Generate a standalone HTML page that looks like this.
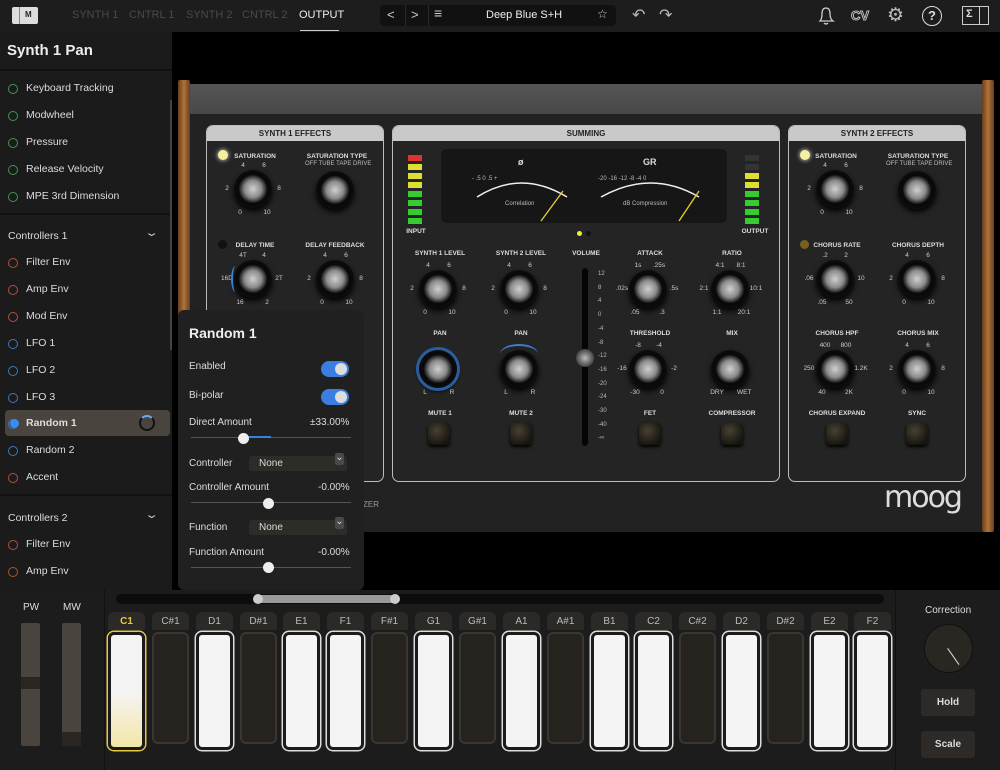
<!DOCTYPE html>
<html><head><meta charset="utf-8"><style>
*{box-sizing:border-box;margin:0;padding:0}
body{width:1000px;height:770px;background:#000;font-family:"Liberation Sans",sans-serif;position:relative;overflow:hidden;color:#ddd}
.a{position:absolute}
.top{left:0;top:0;width:1000px;height:32px;background:#1d1d1d}
.tab{top:9px;font-size:11px;color:#4a4a4a}
.side{left:0;top:32px;width:172px;height:558px;background:#1b1b1b}
.it{left:8px;font-size:10.5px;color:#ddd;height:27px;line-height:27px;padding-left:18px}
.it:before{content:"";position:absolute;left:0;top:9px;width:8px;height:8px;border-radius:50%;border:1.3px solid #3a9a4a}
.r:before{border-color:#b0503a}.b:before{border-color:#3e78b8}
.sec{left:8px;font-size:10.5px;color:#ddd}
.hr{left:0;width:172px;height:2px;background:#111}
.panel{background:#242424;border:1.5px solid #bdbdbd;border-radius:7px;overflow:hidden}
.ph{height:15px;background:#c9c9c9;color:#222;font-size:8px;font-weight:bold;text-align:center;line-height:15px}
.lb{font-size:6.5px;font-weight:bold;color:#ddd;text-align:center;width:90px;margin-left:-45px}
.k{width:38px;height:38px;margin:-19px 0 0 -19px;border-radius:50%;background:radial-gradient(circle at 50% 50%,#d0d0d0 0,#8a8a8a 32%,#3a3a3a 46%,#080808 54%,#141414 100%);box-shadow:0 3px 6px #000}
.kw{width:0;height:0}
.kw span{position:absolute;font-size:6.5px;color:#ccc;width:14px;margin-left:-7px;text-align:center;line-height:7px}
.t0{left:-13px;top:20px}.t10{left:14px;top:20px}.t2{left:-26px;top:-4px}.t8{left:26px;top:-4px}.t4{left:-10px;top:-27px}.t6{left:11px;top:-27px}
.tk{font-size:6px;color:#bbb}
.btn{width:22px;height:22px;margin:-11px 0 0 -11px;border-radius:4px;background:radial-gradient(circle at 40% 35%,#4a4030,#151510 75%);box-shadow:0 2px 3px #000}
.key{top:612px;width:37px;height:18px;border-radius:6px 6px 0 0;background:#2b2a27;font-size:10px;text-align:center;line-height:20px;color:#bbb}
.w{top:632px;width:37px;height:118px;border-radius:6px;background:#f4f4f4;border:3px solid #1b1b1b;box-shadow:0 0 0 1.5px #ddd}
.bk{top:632px;width:37px;height:112px;border-radius:6px;background:#26231f;border:2px solid #3a3631}
.pop{left:178px;top:310px;width:186px;height:280px;background:#202020;border-radius:6px}
.pl{font-size:10px;color:#ddd}
.tg{width:28px;height:16px;border-radius:8px;background:#3a7fe0}
.tg:after{content:"";position:absolute;right:2px;top:2px;width:12px;height:12px;border-radius:50%;background:#ddd}
.sl{height:1px;background:#555;width:160px}
.th{width:11px;height:11px;border-radius:50%;background:#eee;margin:-5px 0 0 -5px}
.dd{width:98px;height:15px;background:#2e2c29;border-radius:3px;font-size:10px;color:#ddd;padding-left:10px;line-height:15px}
.dd:after{content:"⌄";position:absolute;right:3px;top:-3px;font-size:10px;width:9px;height:12px;background:#4a4a4a;border-radius:2px;text-align:center;line-height:10px}
.led{width:5px;height:5px;border-radius:50%}
</style></head><body>
<div class="a top"></div>
<div class="a" style="left:12px;top:7px;width:26px;height:17px;background:#ddd;border-radius:2px"></div>
<div class="a" style="left:19px;top:7px;width:1px;height:17px;background:#888"></div>
<div class="a" style="left:25px;top:10px;font-size:8px;font-weight:bold;color:#222">M</div>
<div class="a tab" style="left:72px">SYNTH 1</div>
<div class="a tab" style="left:129px">CNTRL 1</div>
<div class="a tab" style="left:186px">SYNTH 2</div>
<div class="a tab" style="left:242px">CNTRL 2</div>
<div class="a tab" style="left:299px;color:#eee">OUTPUT</div>
<div class="a" style="left:300px;top:30px;width:39px;height:1px;background:#ccc"></div>
<div class="a" style="left:380px;top:5px;width:236px;height:21px;background:#111;border-radius:4px"></div>
<div class="a" style="left:405px;top:5px;width:1px;height:21px;background:#2a2a2a"></div>
<div class="a" style="left:428px;top:5px;width:1px;height:21px;background:#2a2a2a"></div>
<div class="a" style="left:387px;top:7px;font-size:13px;color:#ccc">&lt;</div>
<div class="a" style="left:411px;top:7px;font-size:13px;color:#ccc">&gt;</div>
<div class="a" style="left:434px;top:5px;font-size:14px;color:#ccc">≡</div>
<div class="a" style="left:486px;top:9px;font-size:11px;color:#eee">Deep Blue S+H</div>
<div class="a" style="left:597px;top:7px;font-size:12px;color:#ccc">☆</div>
<div class="a" style="left:632px;top:5px;font-size:16px;color:#bbb">↶</div>
<div class="a" style="left:659px;top:5px;font-size:16px;color:#bbb">↷</div>
<svg class="a" style="left:816px;top:5px" width="20" height="22" fill="none" stroke="#ccc" stroke-width="1.3"><path d="M4 16 Q6 14 6 9 Q6 3 10 3 Q14 3 14 9 Q14 14 17 16 Z M8 18 Q10 20 12 18"/></svg>
<div class="a" style="left:851px;top:8px;font-size:13px;font-weight:bold;color:#1d1d1d;-webkit-text-stroke:1px #bbb">CV</div>
<div class="a" style="left:887px;top:4px;font-size:19px;color:#bbb">⚙</div>
<div class="a" style="left:922px;top:6px;width:20px;height:20px;border:1.5px solid #ddd;border-radius:50%;font-size:13px;font-weight:bold;text-align:center;line-height:17px;color:#ddd">?</div>
<div class="a" style="left:962px;top:6px;width:27px;height:19px;border:1.3px solid #ccc"></div>
<div class="a" style="left:979px;top:6px;width:1px;height:19px;background:#ccc"></div>
<div class="a" style="left:966px;top:8px;font-size:11px;font-weight:bold;color:#ddd">Σ</div>

<div class="a side"></div>
<div class="a" style="left:7px;top:42px;font-size:15px;font-weight:bold;color:#eee">Synth 1 Pan</div>
<div class="a hr" style="top:69px"></div>
<div class="a it" style="top:75px">Keyboard Tracking</div>
<div class="a it" style="top:102px">Modwheel</div>
<div class="a it" style="top:129px">Pressure</div>
<div class="a it" style="top:156px">Release Velocity</div>
<div class="a it" style="top:183px">MPE 3rd Dimension</div>
<div class="a hr" style="top:213px"></div>
<div class="a sec" style="top:230px">Controllers 1</div>
<div class="a" style="left:147px;top:226px;font-size:11px;color:#ccc;transform:scaleX(1.6)">⌄</div>
<div class="a it r" style="top:249px">Filter Env</div>
<div class="a it r" style="top:276px">Amp Env</div>
<div class="a it r" style="top:303px">Mod Env</div>
<div class="a it b" style="top:330px">LFO 1</div>
<div class="a it b" style="top:357px">LFO 2</div>
<div class="a it b" style="top:384px">LFO 3</div>
<div class="a" style="left:5px;top:410px;width:165px;height:26px;background:#4a443e;border-radius:4px"></div>
<div class="a it b" style="top:410px;font-weight:bold">Random 1</div>
<div class="a" style="left:10px;top:419px;width:9px;height:9px;border-radius:50%;background:#3a8cf0"></div>
<div class="a" style="left:139px;top:415px;width:16px;height:16px;border-radius:50%;border:2px solid #111;border-top-color:#6aa8f0"></div>
<div class="a it b" style="top:437px">Random 2</div>
<div class="a it r" style="top:464px">Accent</div>
<div class="a hr" style="top:494px"></div>
<div class="a sec" style="top:512px">Controllers 2</div>
<div class="a" style="left:147px;top:508px;font-size:11px;color:#ccc;transform:scaleX(1.6)">⌄</div>
<div class="a it r" style="top:531px">Filter Env</div>
<div class="a it r" style="top:558px">Amp Env</div>
<div class="a" style="left:170px;top:100px;width:2px;height:250px;background:#444"></div>

<!-- chassis -->
<div class="a" style="left:178px;top:80px;width:12px;height:452px;background:linear-gradient(90deg,#6a3d1c,#b0723a,#6a3d1c);border-radius:2px"></div>
<div class="a" style="left:982px;top:80px;width:12px;height:452px;background:linear-gradient(90deg,#6a3d1c,#b0723a,#6a3d1c);border-radius:2px"></div>
<div class="a" style="left:190px;top:84px;width:792px;height:448px;background:#222"></div>
<div class="a" style="left:190px;top:84px;width:792px;height:30px;background:linear-gradient(#555,#484848)"></div>

<div class="a panel" style="left:206px;top:125px;width:178px;height:357px"><div class="ph">SYNTH 1 EFFECTS</div></div>
<div class="a panel" style="left:392px;top:125px;width:388px;height:357px"><div class="ph">SUMMING</div></div>
<div class="a panel" style="left:788px;top:125px;width:178px;height:357px"><div class="ph">SYNTH 2 EFFECTS</div></div>

<!-- synth1 effects -->
<div class="a" style="left:218px;top:150px;width:10px;height:10px;border-radius:50%;background:#f4f0a0;box-shadow:0 0 5px #ffe"></div>
<div class="a lb" style="left:255px;top:153px">SATURATION</div>
<div class="a lb" style="left:337px;top:153px">SATURATION TYPE</div>
<div class="a tk" style="left:305px;top:161px">OFF TUBE TAPE DRIVE</div>
<div class="a k" style="left:253px;top:189px"></div><div class="a kw" style="left:253px;top:189px"><span class="t0">0</span><span class="t10">10</span><span class="t2">2</span><span class="t8">8</span><span class="t4">4</span><span class="t6">6</span></div>
<div class="a k" style="left:335px;top:190px"></div>
<div class="a" style="left:218px;top:240px;width:9px;height:9px;border-radius:50%;background:#111"></div>
<div class="a lb" style="left:255px;top:242px">DELAY TIME</div>
<div class="a lb" style="left:335px;top:242px">DELAY FEEDBACK</div>
<div class="a k" style="left:253px;top:279px"></div><div class="a kw" style="left:253px;top:279px"><span class="t0">16</span><span class="t10">2</span><span class="t2">16D</span><span class="t8">2T</span><span class="t4">4T</span><span class="t6">4</span></div>
<div class="a k" style="left:335px;top:279px"></div><div class="a kw" style="left:335px;top:279px"><span class="t0">0</span><span class="t10">10</span><span class="t2">2</span><span class="t8">8</span><span class="t4">4</span><span class="t6">6</span></div>
<div class="a" style="left:231px;top:266px;width:9px;height:26px;border-left:2px solid #3b7fd0;border-radius:50%"></div>

<!-- summing -->
<div class="a" style="left:441px;top:149px;width:286px;height:74px;background:#161616;border-radius:6px"></div>
<div class="a" style="left:518px;top:157px;font-size:9px;font-weight:bold">ø</div>
<div class="a" style="left:643px;top:157px;font-size:9px;font-weight:bold">GR</div>
<svg class="a" style="left:441px;top:149px" width="286" height="74"><path d="M36 48 Q80 20 126 48" fill="none" stroke="#eee" stroke-width="1.5"/><path d="M160 48 Q210 20 258 48" fill="none" stroke="#eee" stroke-width="1.5"/><line x1="100" y1="72" x2="122" y2="42" stroke="#e8d030" stroke-width="1.3"/><line x1="238" y1="72" x2="258" y2="42" stroke="#e8d030" stroke-width="1.3"/></svg>
<div class="a tk" style="left:505px;top:201px">Correlation</div>
<div class="a tk" style="left:623px;top:201px">dB Compression</div>
<div class="a tk" style="left:472px;top:176px">- .5 0 .5 +</div>
<div class="a tk" style="left:598px;top:176px">-20 -16 -12 -8 -4 0</div>
<div class="a" style="left:408px;top:152px;width:14px;height:72px;background:repeating-linear-gradient(#242424 0,#242424 3px,transparent 3px,transparent 9px),linear-gradient(#d33 0,#d33 10px,#dd3 10px,#dd3 36px,#3c3 36px)"></div>
<div class="a" style="left:745px;top:152px;width:14px;height:72px;background:repeating-linear-gradient(#242424 0,#242424 3px,transparent 3px,transparent 9px),linear-gradient(#333 0,#333 20px,#dd3 20px,#dd3 36px,#3c3 36px)"></div>
<div class="a lb" style="left:416px;top:228px">INPUT</div>
<div class="a lb" style="left:755px;top:228px">OUTPUT</div>
<div class="a led" style="left:577px;top:231px;background:#ee3"></div><div class="a led" style="left:586px;top:231px;background:#111"></div>
<div class="a lb" style="left:440px;top:250px">SYNTH 1 LEVEL</div>
<div class="a lb" style="left:521px;top:250px">SYNTH 2 LEVEL</div>
<div class="a lb" style="left:586px;top:250px">VOLUME</div>
<div class="a lb" style="left:650px;top:250px">ATTACK</div>
<div class="a lb" style="left:732px;top:250px">RATIO</div>
<div class="a k" style="left:438px;top:289px"></div><div class="a kw" style="left:438px;top:289px"><span class="t0">0</span><span class="t10">10</span><span class="t2">2</span><span class="t8">8</span><span class="t4">4</span><span class="t6">6</span></div>
<div class="a k" style="left:519px;top:289px"></div><div class="a kw" style="left:519px;top:289px"><span class="t0">0</span><span class="t10">10</span><span class="t2">2</span><span class="t8">8</span><span class="t4">4</span><span class="t6">6</span></div>
<div class="a k" style="left:648px;top:289px"></div><div class="a kw" style="left:648px;top:289px"><span class="t0">.05</span><span class="t10">.3</span><span class="t2">.02s</span><span class="t8">.5s</span><span class="t4">1s</span><span class="t6">.25s</span></div>
<div class="a k" style="left:730px;top:289px"></div><div class="a kw" style="left:730px;top:289px"><span class="t0">1:1</span><span class="t10">20:1</span><span class="t2">2:1</span><span class="t8">10:1</span><span class="t4">4:1</span><span class="t6">8:1</span></div>
<div class="a lb" style="left:440px;top:330px">PAN</div><div class="a lb" style="left:521px;top:330px">PAN</div>
<div class="a lb" style="left:650px;top:330px">THRESHOLD</div><div class="a lb" style="left:732px;top:330px">MIX</div>
<div class="a k" style="left:438px;top:369px;box-shadow:0 0 0 3px #2a5ea0,0 3px 5px #000"></div><div class="a kw" style="left:438px;top:369px"><span class="t0">L</span><span class="t10">R</span></div>
<div class="a k" style="left:519px;top:369px"></div><div class="a kw" style="left:519px;top:369px"><span class="t0">L</span><span class="t10">R</span></div>
<div class="a" style="left:500px;top:344px;width:38px;height:20px;border-top:2px solid #3b7fd0;border-radius:50%"></div>
<div class="a k" style="left:648px;top:369px"></div><div class="a kw" style="left:648px;top:369px"><span class="t0">-30</span><span class="t10">0</span><span class="t2">-16</span><span class="t8">-2</span><span class="t4">-8</span><span class="t6">-4</span></div>
<div class="a k" style="left:730px;top:369px"></div><div class="a kw" style="left:730px;top:369px"><span class="t0">DRY</span><span class="t10">WET</span></div>
<div class="a" style="left:582px;top:268px;width:6px;height:178px;background:#050505;border-radius:3px"></div>
<div class="a" style="left:576px;top:349px;width:18px;height:18px;border-radius:50%;background:radial-gradient(#bbb,#444 70%)"></div>
<div class="a tk" style="left:598px;top:268px;line-height:13.7px">12<br>8<br>4<br>0<br>-4<br>-8<br>-12<br>-16<br>-20<br>-24<br>-30<br>-40<br>-∞</div>
<div class="a lb" style="left:440px;top:410px">MUTE 1</div><div class="a lb" style="left:521px;top:410px">MUTE 2</div>
<div class="a lb" style="left:650px;top:410px">FET</div><div class="a lb" style="left:732px;top:410px">COMPRESSOR</div>
<div class="a btn" style="left:439px;top:434px"></div><div class="a btn" style="left:521px;top:434px"></div>
<div class="a btn" style="left:650px;top:434px"></div><div class="a btn" style="left:732px;top:434px"></div>

<!-- synth2 -->
<div class="a" style="left:800px;top:150px;width:10px;height:10px;border-radius:50%;background:#f4f0a0;box-shadow:0 0 5px #ffe"></div>
<div class="a lb" style="left:836px;top:153px">SATURATION</div>
<div class="a lb" style="left:918px;top:153px">SATURATION TYPE</div>
<div class="a tk" style="left:886px;top:161px">OFF TUBE TAPE DRIVE</div>
<div class="a k" style="left:835px;top:189px"></div><div class="a kw" style="left:835px;top:189px"><span class="t0">0</span><span class="t10">10</span><span class="t2">2</span><span class="t8">8</span><span class="t4">4</span><span class="t6">6</span></div>
<div class="a k" style="left:917px;top:190px"></div>
<div class="a" style="left:800px;top:240px;width:9px;height:9px;border-radius:50%;background:#7a6020"></div>
<div class="a lb" style="left:837px;top:242px">CHORUS RATE</div><div class="a lb" style="left:918px;top:242px">CHORUS DEPTH</div>
<div class="a k" style="left:835px;top:279px"></div><div class="a kw" style="left:835px;top:279px"><span class="t0">.05</span><span class="t10">50</span><span class="t2">.06</span><span class="t8">10</span><span class="t4">.2</span><span class="t6">2</span></div>
<div class="a k" style="left:917px;top:279px"></div><div class="a kw" style="left:917px;top:279px"><span class="t0">0</span><span class="t10">10</span><span class="t2">2</span><span class="t8">8</span><span class="t4">4</span><span class="t6">6</span></div>
<div class="a lb" style="left:837px;top:330px">CHORUS HPF</div><div class="a lb" style="left:918px;top:330px">CHORUS MIX</div>
<div class="a k" style="left:835px;top:369px"></div><div class="a kw" style="left:835px;top:369px"><span class="t0">40</span><span class="t10">2K</span><span class="t2">250</span><span class="t8">1.2K</span><span class="t4">400</span><span class="t6">800</span></div>
<div class="a k" style="left:917px;top:369px"></div><div class="a kw" style="left:917px;top:369px"><span class="t0">0</span><span class="t10">10</span><span class="t2">2</span><span class="t8">8</span><span class="t4">4</span><span class="t6">6</span></div>
<div class="a lb" style="left:837px;top:410px">CHORUS EXPAND</div><div class="a lb" style="left:917px;top:410px">SYNC</div>
<div class="a btn" style="left:837px;top:434px"></div><div class="a btn" style="left:917px;top:434px"></div>
<div class="a" style="left:363px;top:500px;font-size:8px;color:#999">ZER</div>
<div class="a" style="left:884px;top:480px;font-size:30px;color:#ddd;letter-spacing:-2px;font-family:'DejaVu Sans',sans-serif">moog</div>

<!-- popup -->
<div class="a pop"></div>
<div class="a" style="left:189px;top:325px;font-size:14px;font-weight:bold;color:#eee">Random 1</div>
<div class="a pl" style="left:189px;top:361px">Enabled</div><div class="a tg" style="left:321px;top:361px"></div>
<div class="a pl" style="left:189px;top:390px">Bi-polar</div><div class="a tg" style="left:321px;top:389px"></div>
<div class="a pl" style="left:189px;top:417px">Direct Amount</div><div class="a pl" style="left:310px;top:417px">±33.00%</div>
<div class="a sl" style="left:191px;top:437px"></div><div class="a" style="left:243px;top:436px;width:28px;height:2px;background:#3a7fe0"></div><div class="a th" style="left:243px;top:438px"></div>
<div class="a pl" style="left:189px;top:458px">Controller</div><div class="a dd" style="left:249px;top:456px">None</div>
<div class="a pl" style="left:189px;top:482px">Controller Amount</div><div class="a pl" style="left:318px;top:482px">-0.00%</div>
<div class="a sl" style="left:191px;top:502px"></div><div class="a th" style="left:268px;top:503px"></div>
<div class="a pl" style="left:189px;top:522px">Function</div><div class="a dd" style="left:249px;top:520px">None</div>
<div class="a pl" style="left:189px;top:547px">Function Amount</div><div class="a pl" style="left:318px;top:547px">-0.00%</div>
<div class="a sl" style="left:191px;top:567px"></div><div class="a th" style="left:268px;top:567px"></div>

<!-- bottom -->
<div class="a" style="left:0;top:590px;width:1000px;height:180px;background:#1c1c1c"></div>
<div class="a" style="left:104px;top:590px;width:1px;height:180px;background:#111"></div>
<div class="a" style="left:895px;top:590px;width:1px;height:180px;background:#111"></div>
<div class="a" style="left:116px;top:594px;width:768px;height:10px;border-radius:5px;background:#0c0c0c"></div>
<div class="a" style="left:255px;top:595px;width:142px;height:8px;border-radius:4px;background:#999"></div>
<div class="a" style="left:253px;top:594px;width:10px;height:10px;border-radius:50%;background:#ccc"></div>
<div class="a" style="left:390px;top:594px;width:10px;height:10px;border-radius:50%;background:#ccc"></div>
<div class="a" style="left:23px;top:602px;font-size:10px">PW</div><div class="a" style="left:63px;top:602px;font-size:10px">MW</div>
<div class="a" style="left:21px;top:623px;width:19px;height:123px;background:#4a443e;border-radius:2px"></div>
<div class="a" style="left:21px;top:677px;width:19px;height:12px;background:#2a2622"></div>
<div class="a" style="left:62px;top:623px;width:19px;height:123px;background:#4a443e;border-radius:2px"></div>
<div class="a" style="left:62px;top:732px;width:19px;height:14px;background:#2a2622"></div>

<div class="a key" style="left:108px;color:#e8c840;font-weight:bold">C1</div>
<div class="a key" style="left:152px">C#1</div><div class="a key" style="left:196px">D1</div><div class="a key" style="left:240px">D#1</div>
<div class="a key" style="left:283px">E1</div><div class="a key" style="left:327px">F1</div><div class="a key" style="left:371px">F#1</div>
<div class="a key" style="left:415px">G1</div><div class="a key" style="left:459px">G#1</div><div class="a key" style="left:503px">A1</div>
<div class="a key" style="left:547px">A#1</div><div class="a key" style="left:591px">B1</div><div class="a key" style="left:635px">C2</div>
<div class="a key" style="left:679px">C#2</div><div class="a key" style="left:723px">D2</div><div class="a key" style="left:767px">D#2</div>
<div class="a key" style="left:811px">E2</div><div class="a key" style="left:854px">F2</div>
<div class="a w" style="left:108px;background:linear-gradient(#f4f4f4 50%,#f3e6a8);box-shadow:0 0 0 1.5px #e8c840"></div>
<div class="a bk" style="left:152px"></div><div class="a w" style="left:196px"></div><div class="a bk" style="left:240px"></div>
<div class="a w" style="left:283px"></div><div class="a w" style="left:327px"></div><div class="a bk" style="left:371px"></div>
<div class="a w" style="left:415px"></div><div class="a bk" style="left:459px"></div><div class="a w" style="left:503px"></div>
<div class="a bk" style="left:547px"></div><div class="a w" style="left:591px"></div><div class="a w" style="left:635px"></div>
<div class="a bk" style="left:679px"></div><div class="a w" style="left:723px"></div><div class="a bk" style="left:767px"></div>
<div class="a w" style="left:811px"></div><div class="a w" style="left:854px"></div>

<div class="a" style="left:925px;top:605px;font-size:10px;color:#ddd">Correction</div>
<div class="a" style="left:924px;top:624px;width:49px;height:49px;border-radius:50%;background:#2a2622;border:1px solid #111"></div>
<div class="a" style="left:948px;top:648px;width:20px;height:1.3px;background:#ddd;transform-origin:0 0;transform:rotate(55deg)"></div>
<div class="a" style="left:921px;top:689px;width:54px;height:27px;background:#2d2a27;border-radius:3px;font-size:10px;font-weight:bold;text-align:center;line-height:27px">Hold</div>
<div class="a" style="left:921px;top:731px;width:54px;height:27px;background:#2d2a27;border-radius:3px;font-size:10px;font-weight:bold;text-align:center;line-height:27px">Scale</div>
</body></html>
